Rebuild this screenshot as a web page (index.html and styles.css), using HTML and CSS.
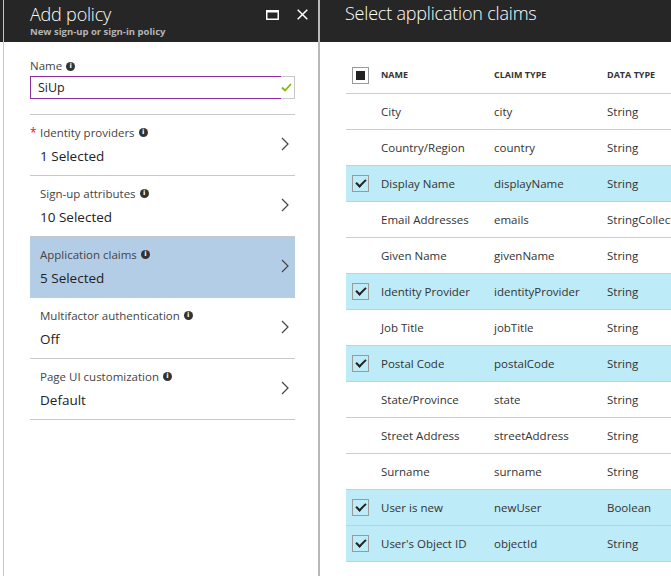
FILE: index.html
```html
<!DOCTYPE html>
<html>
<head>
<meta charset="utf-8">
<link rel="stylesheet" href="styles.css">
</head>
<body>
<div class="page">
  <div class="edge"><div class="edge-head"></div></div>
  <section class="blade blade-left">
    <header class="blade-head">
      <div class="titles">
        <div class="title">Add policy</div>
        <div class="subtitle">New sign-up or sign-in policy</div>
      </div>
      <div class="head-actions">
        <svg class="icon-max" width="13" height="10" viewBox="0 0 13 10"><rect x="0.75" y="1" width="11.5" height="8.25" fill="none" stroke="#fff" stroke-width="1.5"/><rect x="0" y="0" width="13" height="2.5" fill="#fff"/></svg>
        <svg class="icon-close" width="11" height="11" viewBox="0 0 11 11"><path d="M0.7 0.7 L10.3 10.3 M10.3 0.7 L0.7 10.3" stroke="#fff" stroke-width="1.5" fill="none"/></svg>
      </div>
    </header>
    <div class="blade-body">
      <div class="field">
        <div class="field-label">Name <span class="info">i</span></div>
        <div class="input">
          <div class="input-text">SiUp</div>
          <div class="input-valid"><svg width="11" height="9" viewBox="0 0 11 9"><path d="M1 4.5 L4 7.5 L10 1" stroke="#7fba00" stroke-width="1.8" fill="none"/></svg></div>
        </div>
      </div>
      <ul class="menu">
        <li class="menu-item">
          <div class="menu-text">
            <div class="menu-label"><span class="req">*</span>Identity providers <span class="info">i</span></div>
            <div class="menu-value">1 Selected</div>
          </div>
          <svg class="chev" width="8" height="14" viewBox="0 0 8 14"><path d="M1 1 L7 7 L1 13" stroke="#444" stroke-width="1.2" fill="none"/></svg>
        </li>
        <li class="menu-item">
          <div class="menu-text">
            <div class="menu-label">Sign-up attributes <span class="info">i</span></div>
            <div class="menu-value">10 Selected</div>
          </div>
          <svg class="chev" width="8" height="14" viewBox="0 0 8 14"><path d="M1 1 L7 7 L1 13" stroke="#444" stroke-width="1.2" fill="none"/></svg>
        </li>
        <li class="menu-item active">
          <div class="menu-text">
            <div class="menu-label">Application claims <span class="info">i</span></div>
            <div class="menu-value">5 Selected</div>
          </div>
          <svg class="chev" width="8" height="14" viewBox="0 0 8 14"><path d="M1 1 L7 7 L1 13" stroke="#444" stroke-width="1.2" fill="none"/></svg>
        </li>
        <li class="menu-item">
          <div class="menu-text">
            <div class="menu-label">Multifactor authentication <span class="info">i</span></div>
            <div class="menu-value">Off</div>
          </div>
          <svg class="chev" width="8" height="14" viewBox="0 0 8 14"><path d="M1 1 L7 7 L1 13" stroke="#444" stroke-width="1.2" fill="none"/></svg>
        </li>
        <li class="menu-item">
          <div class="menu-text">
            <div class="menu-label">Page UI customization <span class="info">i</span></div>
            <div class="menu-value">Default</div>
          </div>
          <svg class="chev" width="8" height="14" viewBox="0 0 8 14"><path d="M1 1 L7 7 L1 13" stroke="#444" stroke-width="1.2" fill="none"/></svg>
        </li>
      </ul>
    </div>
  </section>
  <section class="blade blade-right">
    <header class="blade-head">
      <div class="title">Select application claims</div>
    </header>
    <div class="claims">
      <div class="row head">
        <div class="cell-check"><span class="cb partial"></span></div>
        <div class="th">NAME</div>
        <div class="th">CLAIM TYPE</div>
        <div class="th">DATA TYPE</div>
      </div>
      <div class="row"><div class="cell-check"></div><div>City</div><div>city</div><div>String</div></div>
      <div class="row"><div class="cell-check"></div><div>Country/Region</div><div>country</div><div>String</div></div>
      <div class="row sel"><div class="cell-check"><span class="cb checked"></span></div><div>Display Name</div><div>displayName</div><div>String</div></div>
      <div class="row"><div class="cell-check"></div><div>Email Addresses</div><div>emails</div><div>StringCollection</div></div>
      <div class="row"><div class="cell-check"></div><div>Given Name</div><div>givenName</div><div>String</div></div>
      <div class="row sel"><div class="cell-check"><span class="cb checked"></span></div><div>Identity Provider</div><div>identityProvider</div><div>String</div></div>
      <div class="row"><div class="cell-check"></div><div>Job Title</div><div>jobTitle</div><div>String</div></div>
      <div class="row sel"><div class="cell-check"><span class="cb checked"></span></div><div>Postal Code</div><div>postalCode</div><div>String</div></div>
      <div class="row"><div class="cell-check"></div><div>State/Province</div><div>state</div><div>String</div></div>
      <div class="row"><div class="cell-check"></div><div>Street Address</div><div>streetAddress</div><div>String</div></div>
      <div class="row"><div class="cell-check"></div><div>Surname</div><div>surname</div><div>String</div></div>
      <div class="row sel"><div class="cell-check"><span class="cb checked"></span></div><div>User is new</div><div>newUser</div><div>Boolean</div></div>
      <div class="row sel"><div class="cell-check"><span class="cb checked"></span></div><div>User's Object ID</div><div>objectId</div><div>String</div></div>
    </div>
  </section>
</div>
</body>
</html>
```

FILE: styles.css
```css
* { box-sizing: border-box; }
html, body { margin: 0; padding: 0; }
body {
  width: 671px;
  height: 576px;
  overflow: hidden;
  background: #fff;
  font-family: "Open Sans", "Noto Sans", sans-serif;
  color: #222;
}
.page {
  display: flex;
  height: 576px;
}
.edge {
  width: 3px;
  flex: none;
}
.edge-head {
  height: 42px;
  background: #262626;
}
.blade {
  display: flex;
  flex-direction: column;
  height: 100%;
}
.blade-left {
  width: 317px;
  flex: none;
  border-left: 1px solid #c6c6c6;
  border-right: 2px solid #b8b8b8;
}
.blade-right {
  flex: 1;
  min-width: 0;
}
.blade-head {
  height: 42px;
  flex: none;
  background: #262626;
  color: #fff;
  display: flex;
  align-items: flex-start;
  justify-content: space-between;
}
.blade-left .blade-head { padding: 2px 10px 0 26px; }
.blade-right .blade-head { padding: 1px 0 0 25px; }
.title {
  font-size: 18px;
  font-weight: 300;
  line-height: 24px;
  letter-spacing: -0.2px;
}
.subtitle {
  font-size: 9.5px;
  font-weight: 700;
  color: #b5b5b5;
  line-height: 11px;
}
.head-actions {
  display: flex;
  align-items: center;
  gap: 18px;
  padding-top: 7px;
}
.icon-max, .icon-close { display: block; }

.blade-body {
  padding: 16px 23px 0 26px;
}
.field-label {
  font-size: 11.5px;
  color: #444;
  line-height: 16px;
  display: flex;
  align-items: center;
  gap: 4px;
}
.info {
  display: inline-flex;
  align-items: center;
  justify-content: center;
  width: 9px;
  height: 9px;
  border-radius: 50%;
  background: #333;
  color: #fff;
  font-size: 7px;
  font-weight: 700;
  line-height: 1;
  font-family: "DejaVu Sans", sans-serif;
}
.input {
  margin-top: 2px;
  display: flex;
  height: 23px;
}
.input-text {
  flex: 1;
  border: 1px solid #8c2e9e;
  border-right: none;
  font-size: 12.5px;
  line-height: 21px;
  padding-left: 7px;
  color: #222;
}
.input-valid {
  width: 14px;
  border: 1px solid #c8c8c8;
  border-left: none;
  display: flex;
  align-items: center;
  justify-content: flex-start;
}
.menu {
  list-style: none;
  margin: 15px 0 0;
  padding: 0;
  border-top: 1px solid #c8c8c8;
}
.menu-item {
  height: 61px;
  border-bottom: 1px solid #c8c8c8;
  display: flex;
  align-items: center;
  justify-content: space-between;
  padding: 0 6px 0 10px;
}
.menu-item.active {
  background: #b3cde6;
}
.menu-text {
  display: flex;
  flex-direction: column;
  gap: 6px;
  margin-top: -1px;
}
.menu-label {
  font-size: 11.5px;
  color: #444;
  line-height: 16px;
  display: flex;
  align-items: center;
  gap: 4px;
  position: relative;
}
.req {
  color: #e81123;
  position: absolute;
  left: -10px;
  top: 0;
  font-size: 12px;
}
.menu-value {
  font-size: 13.5px;
  color: #222;
  line-height: 18px;
}
.chev { display: block; flex: none; margin-bottom: 3px; }

.claims {
  margin: 16px 0 0 26px;
}
.row {
  display: grid;
  grid-template-columns: 35px 113px 113px 1fr;
  height: 36px;
  border-bottom: 1px solid #cdcdcd;
  align-items: center;
  font-size: 11.5px;
  color: #333;
  white-space: nowrap;
  overflow: hidden;
}
.row.sel { background: #bdebf7; }
.row.head {
  font-size: 9px;
  font-weight: 700;
  color: #333;
}
.th { margin-bottom: 3px; }
.cell-check {
  padding-left: 6px;
  display: flex;
  align-items: center;
}
.cb {
  width: 17px;
  height: 17px;
  border: 1px solid #9a9a9a;
  display: flex;
  align-items: center;
  justify-content: center;
  background: transparent;
}
.cb.partial::after {
  content: "";
  width: 9px;
  height: 9px;
  background: #222;
}
.cb.checked::after {
  content: "";
  width: 8px;
  height: 4px;
  border-left: 2px solid #222;
  border-bottom: 2px solid #222;
  transform: translateY(-2px) rotate(-45deg);
}
```
